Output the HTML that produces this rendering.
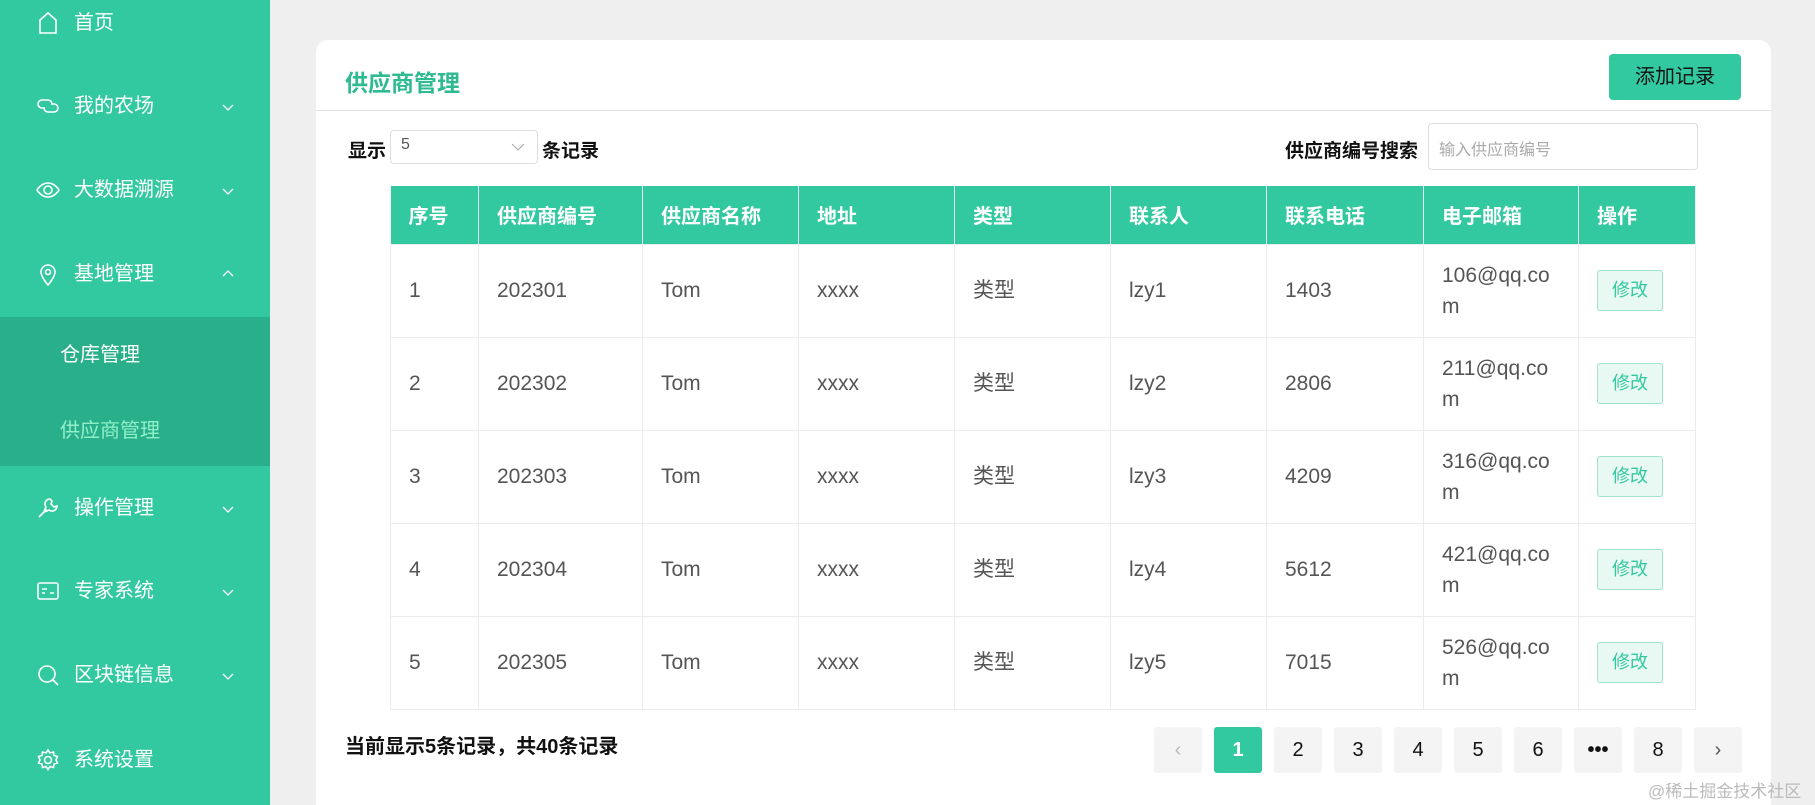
<!DOCTYPE html><html><head><meta charset="utf-8"><style>
*{margin:0;padding:0;box-sizing:border-box}
html,body{width:1815px;height:805px;overflow:hidden}
body{background:#efefef;font-family:"Liberation Sans","Noto Sans CJK SC",sans-serif;position:relative}
.sb{position:absolute;left:0;top:0;width:270px;height:805px;background:#33c9a0}
.sub{position:absolute;left:0;top:317px;width:270px;height:149px;background:#2aaf8b}
.mi{position:absolute;left:36px;color:#fff;font-size:20px;line-height:24px;display:flex;align-items:center}
.mi svg{width:24px;height:24px;margin-right:14px;fill:none;stroke:#fff;stroke-width:1.6}
.ch{position:absolute;left:222px;width:12px;height:12px}
.card{position:absolute;left:316px;top:40px;width:1455px;height:765px;background:#fff;border-radius:12px 12px 0 0}
.t{position:absolute;color:#111;font-weight:bold;font-size:19px}
table{position:absolute;left:390px;top:186px;width:1306px;border-collapse:collapse;font-size:21px;color:#555}
th{background:#33c9a0;color:#fff;text-align:left;height:58px;padding-left:18px;font-size:20px;border-right:1px solid #e6f5f0}
td{height:93px;padding-left:18px;border:1px solid #ececec;line-height:31px}
.btn{display:inline-block;border:1px solid #9fe3cf;background:#e8f8f2;color:#33c9a0;font-size:18px;padding:4px 14px;border-radius:3px}
.pg{position:absolute;top:727px;width:48px;height:46px;background:#f4f4f5;border-radius:3px;text-align:center;line-height:46px;font-size:20px;color:#111}
</style></head><body>
<div class="sb"></div><div class="sub"></div>
<div class="mi" style="top:11px"><svg viewBox="0 0 24 24"><path d="M4 22V9l8-7 8 7v13z"/></svg>首页</div>
<div class="mi" style="top:94px"><svg viewBox="0 0 24 24"><path d="M9 14H6a4 4 0 010-8h6a4 4 0 014 4M15 10h3a4 4 0 010 8h-6a4 4 0 01-4-4"/></svg>我的农场</div>
<div class="mi" style="top:178px"><svg viewBox="0 0 24 24"><path d="M1 12s4-7 11-7 11 7 11 7-4 7-11 7S1 12 1 12z"/><circle cx="12" cy="12" r="4"/></svg>大数据溯源</div>
<div class="mi" style="top:262px"><svg viewBox="0 0 24 24"><path d="M12 23s-7-8-7-13a7 7 0 0114 0c0 5-7 13-7 13z"/><circle cx="12" cy="10" r="2.5"/></svg>基地管理</div>
<div class="mi" style="top:343px;left:60px">仓库管理</div>
<div class="mi" style="top:419px;left:60px;color:#8ff0c8">供应商管理</div>
<div class="mi" style="top:496px"><svg viewBox="0 0 24 24"><path d="M3 21l6-6M8 14l2 2M14 3a5 5 0 00-4 8l-1 2 2 2 2-1a5 5 0 008-4l-3 1-3-3 1-3z"/></svg>操作管理</div>
<div class="mi" style="top:579px"><svg viewBox="0 0 24 24"><rect x="2" y="4" width="20" height="16" rx="2"/><path d="M6 10h5M6 14h3M14 14h4"/></svg>专家系统</div>
<div class="mi" style="top:663px"><svg viewBox="0 0 24 24"><circle cx="11" cy="11" r="8"/><path d="M17 17l5 5"/></svg>区块链信息</div>
<div class="mi" style="top:748px"><svg viewBox="0 0 24 24"><circle cx="12" cy="12" r="3.5"/><path d="M12 2l2 3 3.5-1 .5 3.5 3.5 1-1.5 3.5 1.5 3-3.5 1-.5 3.5-3.5-1-2 3-2-3-3.5 1-.5-3.5-3.5-1 1.5-3-1.5-3.5 3.5-1 .5-3.5 3.5 1z"/></svg>系统设置</div>
<svg class="ch" style="top:101px" viewBox="0 0 12 12" fill="none" stroke="#fff" stroke-width="1.3"><path d="M1 4l5 5 5-5"/></svg>
<svg class="ch" style="top:185px" viewBox="0 0 12 12" fill="none" stroke="#fff" stroke-width="1.3"><path d="M1 4l5 5 5-5"/></svg>
<svg class="ch" style="top:268px" viewBox="0 0 12 12" fill="none" stroke="#fff" stroke-width="1.3"><path d="M1 8l5-5 5 5"/></svg>
<svg class="ch" style="top:503px" viewBox="0 0 12 12" fill="none" stroke="#fff" stroke-width="1.3"><path d="M1 4l5 5 5-5"/></svg>
<svg class="ch" style="top:586px" viewBox="0 0 12 12" fill="none" stroke="#fff" stroke-width="1.3"><path d="M1 4l5 5 5-5"/></svg>
<svg class="ch" style="top:670px" viewBox="0 0 12 12" fill="none" stroke="#fff" stroke-width="1.3"><path d="M1 4l5 5 5-5"/></svg>
<div class="card"></div>
<div style="position:absolute;left:316px;top:110px;width:1455px;height:1px;background:#e3e3e3"></div>
<div class="t" style="left:345px;top:64px;font-size:23px;color:#2fba92">供应商管理</div>
<div style="position:absolute;left:1609px;top:54px;width:132px;height:46px;background:#33c9a0;border-radius:4px;color:#111;font-size:20px;text-align:center;line-height:46px">添加记录</div>
<div class="t" style="left:348px;top:136px">显示</div>
<div style="position:absolute;left:390px;top:130px;width:148px;height:34px;border:1px solid #ddd;border-radius:4px;font-size:16px;color:#555;padding:5px 10px">5<svg style="position:absolute;right:12px;top:12px" width="14" height="8" viewBox="0 0 14 8" fill="none" stroke="#aaa"><path d="M1 1l6 6 6-6"/></svg></div>
<div class="t" style="left:542px;top:136px">条记录</div>
<div class="t" style="left:1285px;top:136px">供应商编号搜索</div>
<div style="position:absolute;left:1428px;top:123px;width:270px;height:47px;border:1px solid #ddd;border-radius:4px;font-size:16px;color:#aaa;padding:12px 10px">输入供应商编号</div>
<table>
<tr><th style="width:88px">序号</th><th style="width:164px">供应商编号</th><th style="width:156px">供应商名称</th><th style="width:156px">地址</th><th style="width:156px">类型</th><th style="width:156px">联系人</th><th style="width:157px">联系电话</th><th style="width:155px">电子邮箱</th><th>操作</th></tr>
<tr><td>1</td><td>202301</td><td>Tom</td><td>xxxx</td><td>类型</td><td>lzy1</td><td>1403</td><td>106@qq.co<br>m</td><td><span class="btn">修改</span></td></tr>
<tr><td>2</td><td>202302</td><td>Tom</td><td>xxxx</td><td>类型</td><td>lzy2</td><td>2806</td><td>211@qq.co<br>m</td><td><span class="btn">修改</span></td></tr>
<tr><td>3</td><td>202303</td><td>Tom</td><td>xxxx</td><td>类型</td><td>lzy3</td><td>4209</td><td>316@qq.co<br>m</td><td><span class="btn">修改</span></td></tr>
<tr><td>4</td><td>202304</td><td>Tom</td><td>xxxx</td><td>类型</td><td>lzy4</td><td>5612</td><td>421@qq.co<br>m</td><td><span class="btn">修改</span></td></tr>
<tr><td>5</td><td>202305</td><td>Tom</td><td>xxxx</td><td>类型</td><td>lzy5</td><td>7015</td><td>526@qq.co<br>m</td><td><span class="btn">修改</span></td></tr>
</table>
<div class="t" style="left:345px;top:730px;font-size:20px">当前显示5条记录，共40条记录</div>
<div class="pg" style="left:1154px;color:#bbb">‹</div>
<div class="pg" style="left:1214px;background:#33c9a0;color:#fff;font-weight:bold">1</div>
<div class="pg" style="left:1274px">2</div>
<div class="pg" style="left:1334px">3</div>
<div class="pg" style="left:1394px">4</div>
<div class="pg" style="left:1454px">5</div>
<div class="pg" style="left:1514px">6</div>
<div class="pg" style="left:1574px;font-weight:bold">•••</div>
<div class="pg" style="left:1634px">8</div>
<div class="pg" style="left:1694px;color:#555">›</div>
<div style="position:absolute;left:1648px;top:777px;font-size:17px;color:#bbb">@稀土掘金技术社区</div>
</body></html>
